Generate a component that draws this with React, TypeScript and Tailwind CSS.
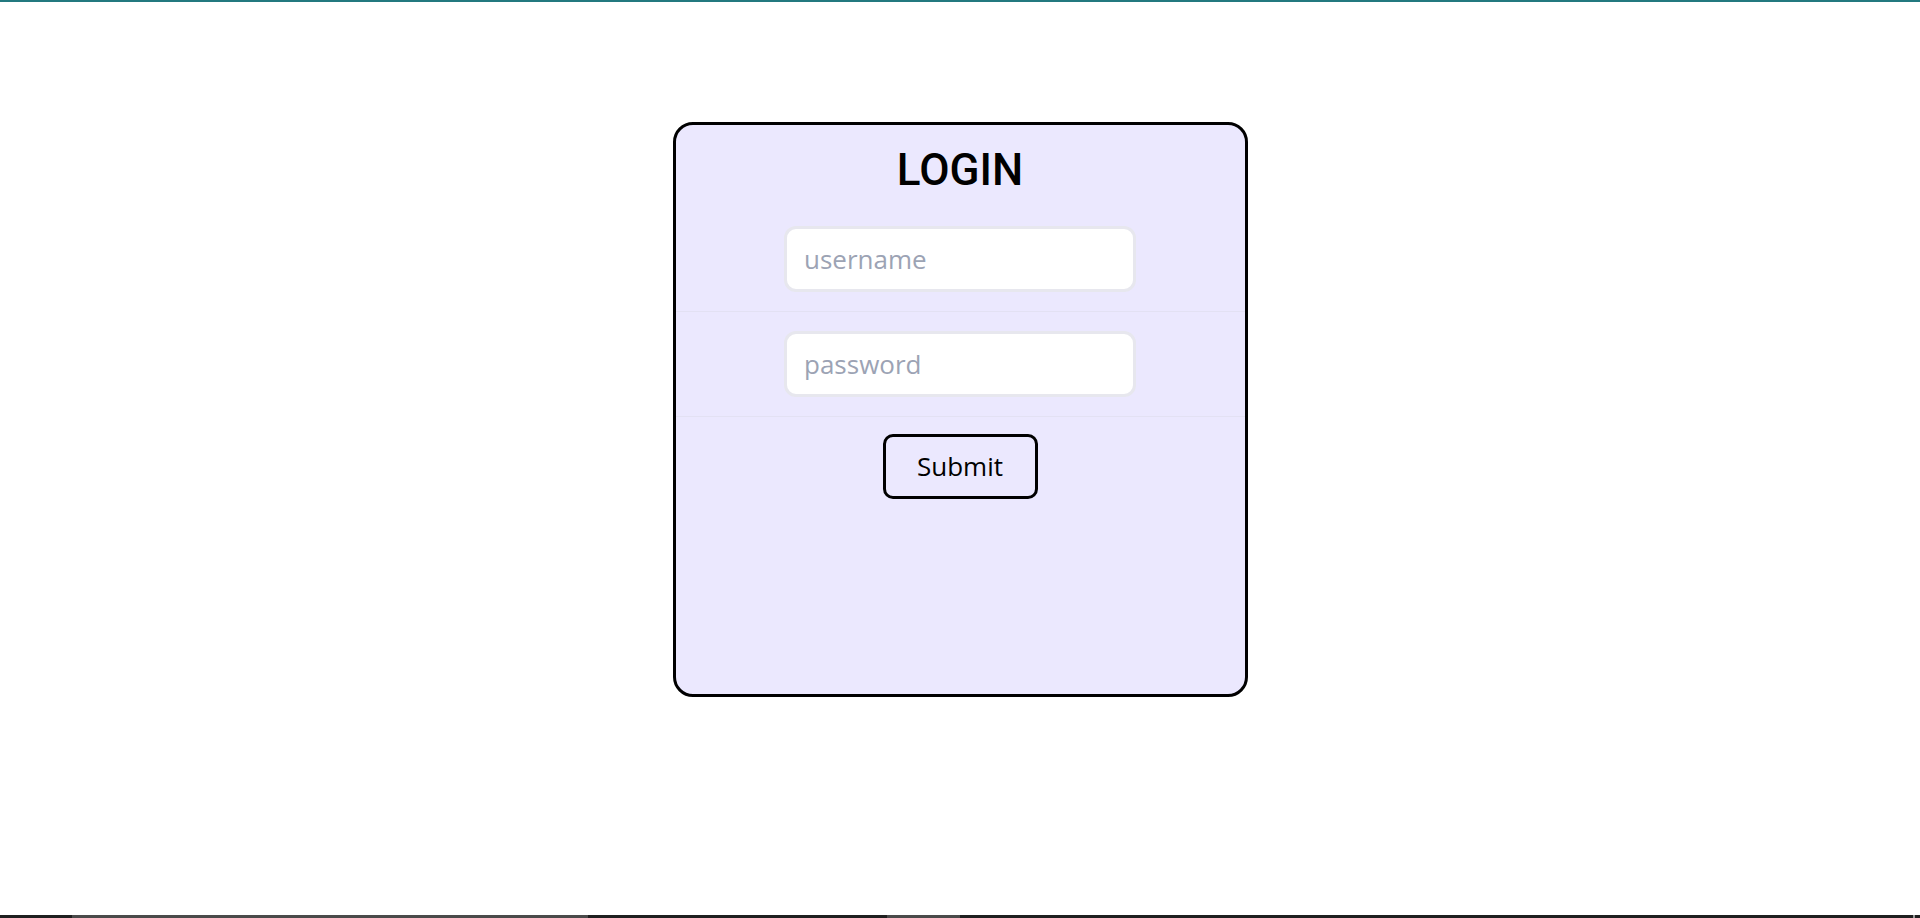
import React from 'react';

const LoginCard = () => {
  return (
    <div className="w-[575px] h-[575px] bg-[#ebe8fe] border-[3px] border-black rounded-[20px] flex flex-col">
      <h1 className="mt-[23px] mb-[15px] text-center text-[44px] leading-none font-medium text-black font-['Roboto',sans-serif]">
        LOGIN
      </h1>

      <div className="flex justify-center py-[19px] border-b border-[#e3e1f3]">
        <input
          type="text"
          placeholder="username"
          className="w-[352px] h-[66px] bg-white border-[3px] border-[#e7e7ee] rounded-[12px] pl-[17px] text-[26px] text-black placeholder:text-[#9ca3b4] outline-none font-['Open_Sans',sans-serif]"
        />
      </div>

      <div className="flex justify-center py-[19px] border-b border-[#e3e1f3]">
        <input
          type="password"
          placeholder="password"
          className="w-[352px] h-[66px] bg-white border-[3px] border-[#e7e7ee] rounded-[12px] pl-[17px] text-[26px] text-black placeholder:text-[#9ca3b4] outline-none font-['Open_Sans',sans-serif]"
        />
      </div>

      <div className="flex justify-center pt-[17px]">
        <button className="w-[155px] h-[65px] border-[3px] border-black rounded-[10px] bg-transparent text-[26px] text-black font-['Open_Sans',sans-serif]">
          Submit
        </button>
      </div>
    </div>
  );
};

export default function App() {
  return (
    <div className="min-h-screen flex flex-col bg-white">
      <div className="h-[2px] bg-[#23797f]" />
      <main className="flex-1 flex justify-center pt-[120px]">
        <LoginCard />
      </main>
      {/* strip along the bottom edge */}
      <div className="h-[3px] flex">
        <div className="w-[72px] bg-[#1f1f1f]" />
        <div className="w-[516px] bg-[#4a4a4a]" />
        <div className="w-[299px] bg-[#1f1f1f]" />
        <div className="w-[73px] bg-[#4a4a4a]" />
        <div className="flex-1 bg-[#1f1f1f]" />
        <div className="w-[2px] bg-[#9a9a9a]" />
        <div className="w-[5px] bg-[#1f1f1f]" />
      </div>
    </div>
  );
}
